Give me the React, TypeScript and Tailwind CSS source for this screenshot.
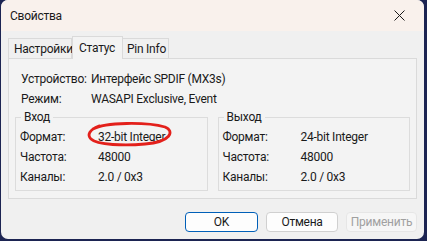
import React from "react";

const font = { fontFamily: 'Roboto, "Noto Sans", sans-serif' };

function Row({ label, value, w }: { label: string; value: string; w: string }) {
  return (
    <div className="flex h-[20px] items-center whitespace-nowrap leading-[20px]">
      <div className={w}>{label}</div>
      <div>{value}</div>
    </div>
  );
}

function Group({ title, fmt }: { title: string; fmt: string }) {
  return (
    <div className="relative h-[74px] flex-1 border border-[#dcdcdc] pl-[4px] pt-[9px]">
      <div className="absolute left-[5px] top-[-9px] bg-[#f3f3f3] px-[3px] leading-[16px]">{title}</div>
      <Row label="Формат:" value={fmt} w="w-[78px]" />
      <Row label="Частота:" value="48000" w="w-[78px]" />
      <Row label="Каналы:" value="2.0 / 0x3" w="w-[78px]" />
    </div>
  );
}

export default function App() {
  return (
    <div className="h-[241px] w-[427px] overflow-hidden bg-[#1c2452] text-[12px] leading-[16px] tracking-[-0.25px] text-[#1a1a1a]" style={font}>
      <div className="ml-[1px] flex h-[239px] w-[423px] flex-col overflow-hidden rounded-[7px] bg-[#f0f0f0]">
        <div className="flex h-[31px] items-center justify-between bg-[#f9f1ec] pl-[9px] pr-[19px]">
          <span className="leading-none">Свойства</span>
          <svg width="11" height="11" viewBox="0 0 11 11">
            <path d="M0.5 0.5 L10.5 10.5 M10.5 0.5 L0.5 10.5" stroke="#1a1a1a" strokeWidth="1" />
          </svg>
        </div>
        <div className="flex flex-col px-[7px] pt-[5px]">
          <div className="flex h-[22px] items-end whitespace-nowrap">
            <div className="flex h-[20px] w-[64px] items-center border border-b-0 border-[#dadada] pl-[5px]">Настройки</div>
            <div className="relative z-10 mb-[-1px] flex h-[23px] w-[51px] items-start border border-b-0 border-[#dadada] bg-[#f3f3f3] pl-[6px] pt-[3px]">Статус</div>
            <div className="flex h-[20px] w-[46px] items-center border border-b-0 border-l-0 border-[#dadada] pl-[4px]">Pin Info</div>
          </div>
          <div className="relative h-[141px] border border-[#dadada] bg-[#f3f3f3] px-[6px] pt-[10px]">
            <div className="pl-[6px]">
              <Row label="Устройство:" value="Интерфейс SPDIF (MX3s)" w="w-[70px]" />
              <Row label="Режим:" value="WASAPI Exclusive, Event" w="w-[70px]" />
            </div>
            <div className="mt-[8px] flex gap-[10px]">
              <Group title="Вход" fmt="32-bit Integer" />
              <Group title="Выход" fmt="24-bit Integer" />
            </div>
            <svg className="pointer-events-none absolute left-[76px] top-[61px]" width="90" height="30" viewBox="0 0 90 30">
              <path
                d="M8 9 C 20 2, 62 2, 80 7 C 90 11, 86 22, 60 24 C 40 26, 12 25, 6 19 C 2 15, 4 10, 14 6"
                fill="none"
                stroke="#e3201b"
                strokeWidth="2.8"
                strokeLinecap="round"
              />
            </svg>
          </div>
          <div className="mt-[13px] flex justify-end gap-[8px]">
            <button className="h-[20px] w-[73px] rounded-[4px] border border-[#005fb8] bg-[#fdfdfd] leading-none">OK</button>
            <button className="h-[20px] w-[72px] rounded-[4px] border border-[#d0d0d0] bg-[#fdfdfd] leading-none">Отмена</button>
            <button className="h-[20px] w-[71px] rounded-[4px] border border-[#e6e6e6] bg-[#f6f6f6] leading-none text-[#a0a0a0]">Применить</button>
          </div>
        </div>
      </div>
    </div>
  );
}
